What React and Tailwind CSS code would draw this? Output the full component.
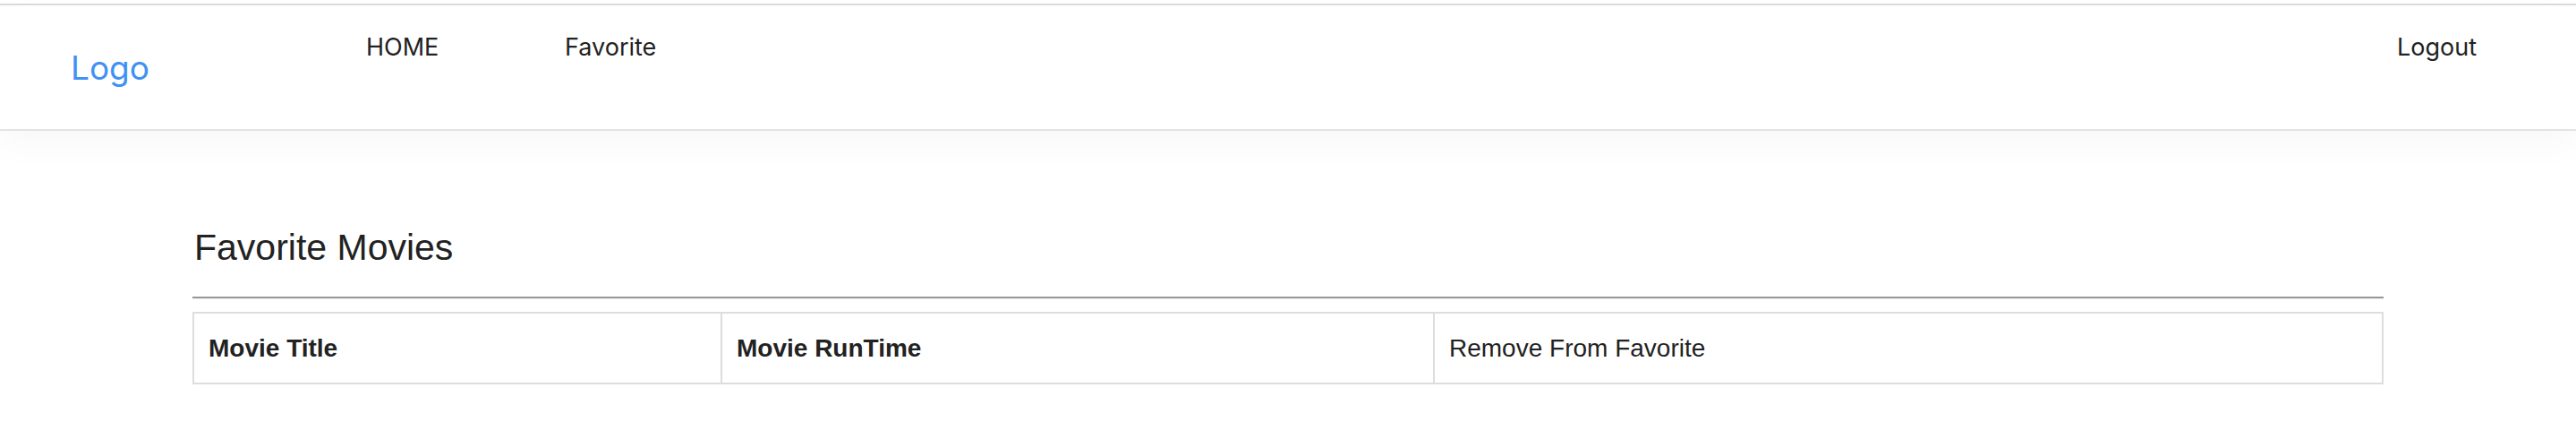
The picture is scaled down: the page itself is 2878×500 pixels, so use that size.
import React from "react";

const navFont = { fontFamily: "Inter, 'Noto Sans', sans-serif" };

const Header = () => {
  return (
    <div className="border-t-2 border-[#dcdcdc] mt-1">
      <nav
        className="relative z-10 flex h-[140px] items-stretch border-b-2 border-[#e3e3e3] bg-white shadow-[0_12px_40px_rgba(0,0,0,0.035)]"
        style={navFont}
      >
        <div className="flex w-[409px] items-center pl-[79px]">
          <a href="#" className="text-[37px] leading-none text-[#3f91f3]">
            Logo
          </a>
        </div>
        <ul className="flex flex-1 items-start pt-[33px] text-[27px] leading-none text-[#222]">
          <li className="w-[222px]">
            <a href="#">HOME</a>
          </li>
          <li>
            <a href="#">Favorite</a>
          </li>
          <li className="ml-auto pr-[111px]">
            <a href="#">Logout</a>
          </li>
        </ul>
      </nav>
    </div>
  );
};

const FavoriteTable = () => {
  return (
    <div
      className="mx-auto w-[2448px] pt-[110px]"
      style={{ fontFamily: "'Liberation Sans', Arial, sans-serif" }}
    >
      <h2 className="pl-[2px] text-[41px] font-normal leading-none text-[#222]">
        Favorite Movies
      </h2>
      <hr className="mt-[34px] border-t-2 border-b border-t-[#999] border-b-[#eee]" />
      <table className="mt-[14px] w-full border-collapse text-[28px] text-[#222]">
        <tbody>
          <tr className="h-[79px]">
            <td className="w-[590px] border-2 border-[#ddd] px-[16px] font-bold">
              Movie Title
            </td>
            <td className="w-[796px] border-2 border-[#ddd] px-[16px] font-bold">
              Movie RunTime
            </td>
            <td className="border-2 border-[#ddd] px-[16px]">
              Remove From Favorite
            </td>
          </tr>
        </tbody>
      </table>
    </div>
  );
};

export default function App() {
  return (
    <div className="min-h-[500px] bg-white">
      <Header />
      <FavoriteTable />
    </div>
  );
}
